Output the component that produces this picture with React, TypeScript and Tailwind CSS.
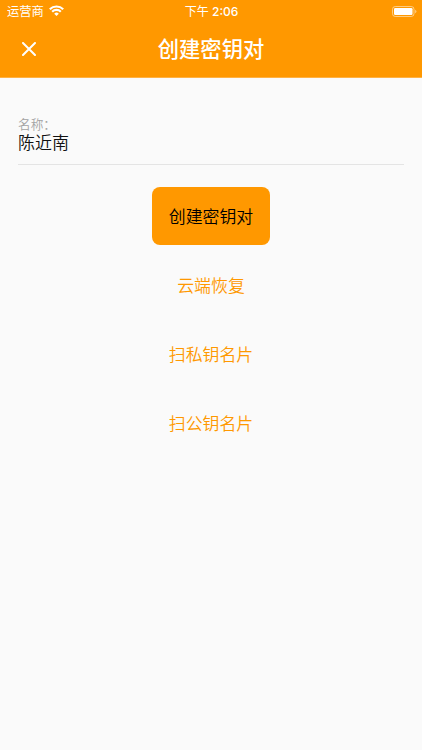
const cjk = "font-['Inter','Noto_Sans_CJK_SC',sans-serif]";

function StatusBar() {
  return (
    <div className="grid h-[22px] grid-cols-3 items-center pl-[7px] pr-[5px] text-[12px] leading-[22px] text-white">
      <div className="flex items-center gap-[5px]">
        <span className="pt-px text-[12.3px]">运营商</span>
        <svg className="mb-[2px]" width="15" height="11" viewBox="0 0 15 11" fill="none" stroke="white" strokeWidth="2.2">
          <path d="M0.8 4.2a9.6 9.6 0 0 1 13.4 0M3.2 6.7a6.1 6.1 0 0 1 8.6 0" />
          <path d="M7.5 11 5.2 8.7a3.2 3.2 0 0 1 4.6 0Z" fill="white" stroke="none" />
        </svg>
      </div>
      <span className="whitespace-nowrap pr-px pt-px text-center">下午 <span className="font-medium">2:06</span></span>
      <svg className="mb-px justify-self-end" width="25" height="11" viewBox="0 0 25 11">
        <rect x="0.5" y="0.5" width="21.5" height="10" rx="2.8" fill="none" stroke="white" strokeOpacity=".5" />
        <rect x="2" y="2" width="18.5" height="7" rx="1.2" fill="white" />
        <path d="M23.2 3.8v3.4q1.2-.4 1.2-1.7t-1.2-1.7Z" fill="white" fillOpacity=".55" />
      </svg>
    </div>
  );
}

export default function App() {
  return (
    <main className={`flex h-[750px] w-full flex-col bg-[#fafafa] ${cjk}`}>
      <header className="h-[78px] border-b border-[#ffb143] bg-[#ff9800] text-white">
        <StatusBar />
        <div className="grid h-[54px] grid-cols-[60px_1fr_60px] items-center">
          <button aria-label="关闭" className="pl-[22px]">
            <svg width="14" height="14" viewBox="0 0 14 14" stroke="white" strokeWidth="2" strokeLinecap="round"><path d="m1 1 12 12M13 1 1 13" /></svg>
          </button>
          <h1 className="text-center text-[21.3px] font-medium leading-[30px]">创建密钥对</h1>
        </div>
      </header>
      <section className="mx-[18px] flex h-[87px] flex-col border-b border-[#e4e4e4] pt-[39px]">
        <label className="h-[15px] text-[12.7px] font-[350] leading-[16px] text-[#a3a3a3]">名称：</label>
        <span className="text-[17px] font-[350] leading-[22px] text-[#111]">陈近南</span>
      </section>
      <div className="flex flex-col items-center text-[16.9px] font-[350] text-[#ff9800]">
        <button className="mt-[22px] h-[58px] w-[118px] rounded-[8px] bg-[#ff9800] pt-[3px] text-black">创建密钥对</button>
        <button className="mt-[7px] h-[68px] pt-[2px]">云端恢复</button>
        <button className="h-[69px] pt-[2px]">扫私钥名片</button>
        <button className="h-[69px] pt-[2px]">扫公钥名片</button>
      </div>
    </main>
  );
}
